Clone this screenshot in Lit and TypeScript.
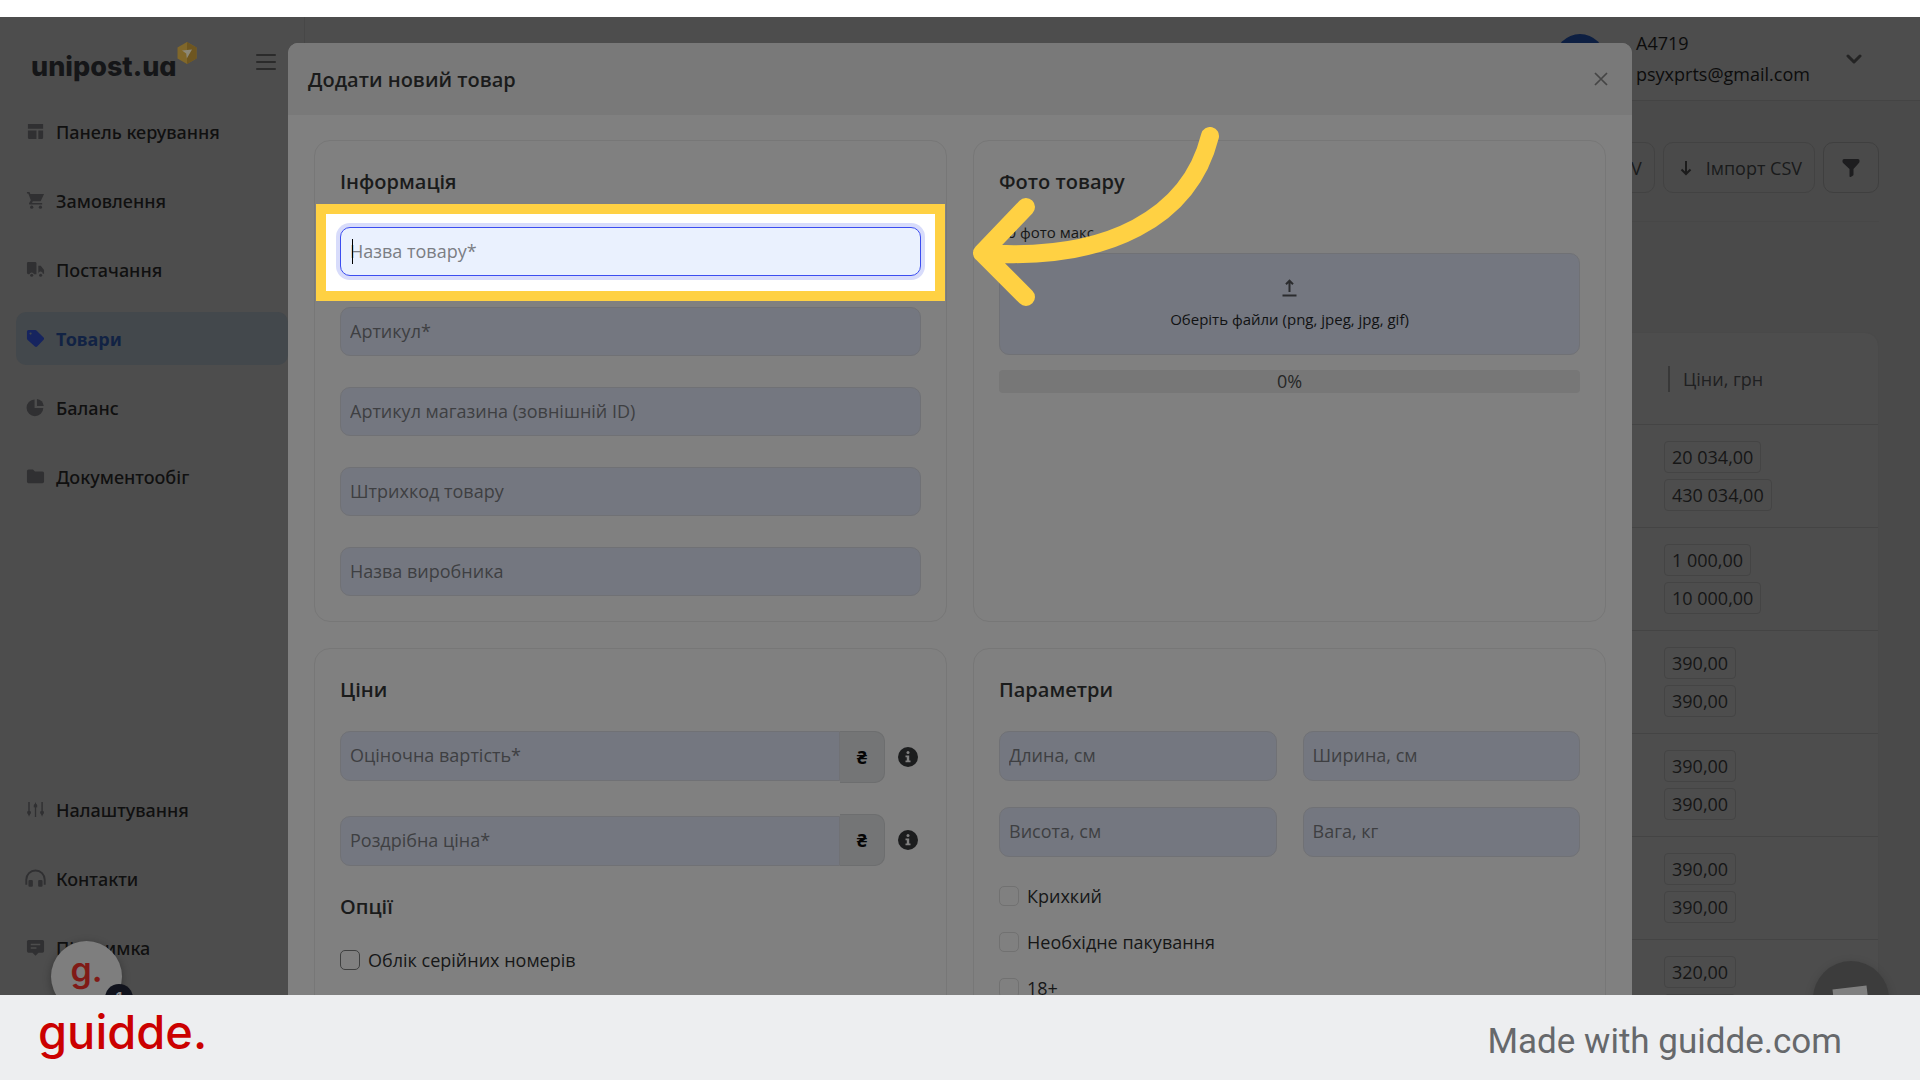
import { LitElement, html, css, svg, nothing } from "lit";
import { customElement, property } from "lit/decorators.js";
import { classMap } from "lit/directives/class-map.js";

const icons: Record<string, unknown> = {
  dashboard: svg`<path d="M2 2h16v5H2zM2 9h9v9H3.500a1.500 1.500 0 0 1-1.500-1.500zM13 9h5v7.500a1.500 1.500 0 0 1-1.500 1.500H13z"/>`,
  cart: svg`<path d="M1 1h2.600l1 2.200H19l-3.600 7.600H7.200l-.9 1.700H17v1.800H4.200a1 1 0 0 1-.8-1.600l1.700-2.900L2.400 2.700H1z"/><circle cx="6" cy="17" r="1.700"/><circle cx="15.200" cy="17" r="1.700"/>`,
  truck: svg`<path d="M1 3.500A1.500 1.500 0 0 1 2.500 2h7A1.500 1.500 0 0 1 11 3.500V15H8.400a2.500 2.500 0 0 0-4.800 0H2.500A1.500 1.500 0 0 1 1 13.500zM13 6h2.500L19 10.500v4h-1.300a2.400 2.400 0 0 0-4.700-.6z"/><circle cx="6" cy="16" r="1.600"/><circle cx="15.400" cy="16" r="1.600"/>`,
  tag: svg`<path d="M1 2.600A1.600 1.600 0 0 1 2.600 1h7.200c.5 0 .9.200 1.200.5l7.500 7.500c.7.700.7 1.600 0 2.300l-6.800 7.200c-.6.700-1.600.7-2.300 0L1.500 11.200a1.600 1.600 0 0 1-.5-1.200z"/><circle class="hole" cx="4.800" cy="4.800" r="1.200"/>`,
  pie: svg`<path d="M9 1.500v9h9.200A8.800 8.800 0 1 1 9 1.500z"/><path d="M11.500 1a8 8 0 0 1 7.200 7.500h-7.200z"/>`,
  folder: svg`<path d="M1 4.200A1.700 1.700 0 0 1 2.700 2.500h4.600L9.500 4.700h7.800A1.700 1.700 0 0 1 19 6.400v8.900a1.700 1.700 0 0 1-1.700 1.700H2.700A1.700 1.700 0 0 1 1 15.300z"/>`,
  sliders: svg`<path d="M2.400 2h1.500v10h1.300l-2 5.500-2-5.500h1.200zM9.300 7.500H8l2-5.500 2 5.500h-1.300V18H9.300zM16.200 2h1.500v10h1.200l-2 5.500-2-5.500h1.300z"/><circle cx="3.200" cy="13.500" r="1.900"/><circle cx="10" cy="6" r="1.900"/><circle cx="16.900" cy="13.500" r="1.900"/>`,
  headphones: svg`<path class="line" d="M.3 16.500v-5.300a9.700 9.700 0 0 1 19.400 0v5.300"/><rect x="2.600" y="11.500" width="4.600" height="7.200" rx="1.200"/><rect x="12.800" y="11.500" width="4.600" height="7.200" rx="1.200"/>`,
  message: svg`<path fill-rule="evenodd" d="M2.700 2h14.600A1.700 1.700 0 0 1 19 3.700v10.100a1.700 1.700 0 0 1-1.700 1.700h-4.200L10 18.700l-3.100-3.200H2.700A1.700 1.700 0 0 1 1 13.800V3.700A1.700 1.700 0 0 1 2.700 2zM5 6v1.500h10V6zM5 9.800v1.500h6V9.800z"/>`,
};

interface NavItem {
  icon: string;
  label: string;
  active?: boolean;
}

const mainNav: NavItem[] = [
  { icon: "dashboard", label: "Панель керування" },
  { icon: "cart", label: "Замовлення" },
  { icon: "truck", label: "Постачання" },
  { icon: "tag", label: "Товари", active: true },
  { icon: "pie", label: "Баланс" },
  { icon: "folder", label: "Документообіг" },
];

const footNav: NavItem[] = [
  { icon: "sliders", label: "Налаштування" },
  { icon: "headphones", label: "Контакти" },
  { icon: "message", label: "Підтримка" },
];

const prices: string[][] = [
  ["20 034,00", "430 034,00"],
  ["1 000,00", "10 000,00"],
  ["390,00", "390,00"],
  ["390,00", "390,00"],
  ["390,00", "390,00"],
  ["320,00", "320,00"],
];

const base = css`
  :host,
  * {
    box-sizing: border-box;
  }
  button,
  input {
    font: inherit;
    color: inherit;
  }
  h1,
  h2,
  p {
    margin: 0;
  }
  svg {
    display: block;
  }
`;

@customElement("side-nav")
class SideNav extends LitElement {
  static styles = [
    base,
    css`
      :host {
        display: flex;
        flex-direction: column;
        background: #4d4d4d;
        border-right: 1px solid #474747;
        padding: 22px 16px 21px;
      }
      .top {
        display: flex;
        justify-content: space-between;
        align-items: flex-start;
        height: 66px;
        padding: 3px 12px 0 15px;
      }
      .logo {
        display: flex;
        align-items: flex-start;
        color: #151618;
        font: 800 27px/32px Inter, sans-serif;
        font-feature-settings: "cv11";
        text-decoration: none;
      }
      .word {
        padding-top: 9px;
      }
      .burger {
        border: 0;
        background: none;
        padding: 0;
        margin-top: 10px;
        height: 20px;
      }
      .list {
        display: flex;
        flex-direction: column;
        gap: 16px;
      }
      .foot {
        margin-top: auto;
      }
      .item {
        display: flex;
        align-items: center;
        gap: 11px;
        height: 53px;
        padding-left: 10px;
        border-radius: 10px;
        color: #101010;
        font-family: "Noto Sans", "Open Sans", sans-serif;
        font-weight: 500;
        text-decoration: none;
      }
      .item.active {
        background: #43484c;
        color: #122344;
        font-weight: 700;
      }
      .icon {
        width: 19px;
        height: 19px;
        fill: #303032;
        overflow: visible;
      }
      .active .icon {
        fill: #16245f;
      }
      .hole {
        fill: #43484c;
      }
      .line {
        fill: none;
        stroke: #303032;
        stroke-width: 2;
      }
    `,
  ];

  private item(n: NavItem) {
    return html`<a href="#" class=${classMap({ item: true, active: !!n.active })}>
      <svg class="icon" viewBox="0 0 20 20" aria-hidden="true">${icons[n.icon]}</svg>
      <span>${n.label}</span>
    </a>`;
  }

  render() {
    return html`
      <div class="top">
        <a class="logo" href="#">
          <span class="word">unipost.ua</span>
          <svg width="20" height="22" viewBox="0 0 20 22" aria-hidden="true">
            <path fill="#80672a" d="M10 0l9.500 5.500v11L10 22 .500 16.500v-11z" />
            <path fill="#6e5620" d="M10 0l9.500 5.500v11L10 22z" />
            <path fill="#8c8878" d="M15 7.500L5 8.600l4.200 2.800.6 5z" />
          </svg>
        </a>
        <button class="burger" aria-label="Меню">
          <svg width="20" height="20" viewBox="0 0 20 20" aria-hidden="true">
            <path fill="none" stroke="#2b2b2b" stroke-width="2" stroke-linecap="round" d="M1 3h18M1 10h18M1 17h18" />
          </svg>
        </button>
      </div>
      <nav class="list">${mainNav.map((n) => this.item(n))}</nav>
      <nav class="list foot">${footNav.map((n) => this.item(n))}</nav>
    `;
  }
}

@customElement("product-page")
class ProductPage extends LitElement {
  static styles = [
    base,
    css`
      :host {
        display: block;
        background: #4a4a4a;
      }
      .bar {
        display: flex;
        justify-content: flex-end;
        align-items: center;
        height: 84px;
        padding: 0 58px 0 0;
        background: #4d4d4d;
        border-bottom: 1px solid #444;
        color: #0c0c0c;
      }
      .avatar {
        width: 50px;
        height: 50px;
        border-radius: 50%;
        background: #0d1f42;
        margin-right: 31px;
      }
      .user {
        width: 210px;
        line-height: 31px;
      }
      .chevron {
        border: 0;
        background: none;
        padding: 0;
        height: 16px;
      }
      .content {
        padding: 41px 41px 0 41px;
      }
      .tools {
        display: flex;
        justify-content: flex-end;
        gap: 8px;
        padding-bottom: 28px;
        border-bottom: 1px solid #474747;
        color: #191a1b;
      }
      .tool {
        display: flex;
        align-items: center;
        gap: 14px;
        height: 51px;
        padding: 0 12px 0 16px;
        border: 1px solid #424242;
        border-radius: 10px;
        background: none;
      }
      .tool.square {
        padding: 0 18px;
        border-color: #3f3f3f;
      }
      .table {
        width: 100%;
        margin-top: 110px;
        border-collapse: separate;
        border-spacing: 0;
        background: #4d4d4d;
        border: 1px solid #494949;
        border-radius: 14px;
        color: #161616;
      }
      th {
        height: 92px;
        padding: 0;
        text-align: left;
        font-weight: 400;
        border-bottom: 1px solid #444;
        color: #1f2021;
      }
      td {
        padding: 16px 0;
        border-bottom: 1px solid #444;
      }
      .price {
        width: 214px;
      }
      .head {
        display: block;
        margin-left: 4px;
        padding-left: 13px;
        border-left: 2px solid #383838;
        line-height: 26px;
      }
      .stack {
        display: flex;
        flex-direction: column;
        align-items: flex-start;
        gap: 6px;
      }
      .badge {
        height: 32px;
        padding: 0 7px;
        border: 1px solid #444;
        border-radius: 4px;
        line-height: 30px;
      }
    `,
  ];

  render() {
    return html`
      <header class="bar">
        <div class="avatar"></div>
        <div class="user">
          <div>A4719</div>
          <div>psyxprts@gmail.com</div>
        </div>
        <button class="chevron" aria-label="Профіль">
          <svg width="16" height="16" viewBox="0 0 16 16" aria-hidden="true">
            <path fill="none" stroke="#242424" stroke-width="3" stroke-linecap="round" stroke-linejoin="round" d="M2 5l6 6 6-6" />
          </svg>
        </button>
      </header>
      <div class="content">
        <div class="tools">
          <button class="tool">Експорт CSV</button>
          <button class="tool">
            <svg width="12" height="16" viewBox="0 0 12 16" aria-hidden="true">
              <path fill="none" stroke="#1c1c1c" stroke-width="2" d="M6 1v13M1.500 9.500L6 14l4.500-4.500" />
            </svg>
            <span>Імпорт CSV</span>
          </button>
          <button class="tool square" aria-label="Фільтр">
            <svg width="18" height="20" viewBox="0 0 18 20" aria-hidden="true">
              <path fill="#1d1d1f" d="M2 1h14a1.500 1.500 0 0 1 1.500 1.500v1c0 .6-.2 1-.6 1.400L11.500 11v5.500c0 .6-.3 1-.8 1.300l-2 1.100c-.6.300-1.200 0-1.200-.7V11L1.100 4.900A2 2 0 0 1 .500 3.500v-1A1.500 1.500 0 0 1 2 1z" />
            </svg>
          </button>
        </div>
        <table class="table">
          <thead>
            <tr>
              <th></th>
              <th class="price"><span class="head">Ціни, грн</span></th>
            </tr>
          </thead>
          <tbody>
            ${prices.map(
              (row) => html`<tr>
                <td></td>
                <td class="price">
                  <div class="stack">${row.map((p) => html`<span class="badge">${p}</span>`)}</div>
                </td>
              </tr>`
            )}
          </tbody>
        </table>
      </div>
    `;
  }
}

@customElement("text-field")
class TextField extends LitElement {
  @property() label = "";
  @property({ type: Boolean }) currency = false;
  @property({ type: Boolean }) focused = false;
  @property({ type: Boolean }) low = false;

  static styles = [
    base,
    css`
      :host {
        display: block;
        position: relative;
      }
      .row {
        display: flex;
        align-items: flex-start;
      }
      .row.low {
        align-items: flex-end;
      }
      .input {
        flex: 1;
        min-width: 0;
        width: 100%;
        height: var(--field-height, 49px);
        padding: 0 9px 2px;
        border: 1px solid #707175;
        border-radius: 10px;
        background: #747780;
        outline: none;
      }
      .input::placeholder {
        color: #3e3f42;
        opacity: 1;
      }
      .currency .input {
        border-radius: 10px 0 0 10px;
      }
      .addon {
        display: grid;
        place-items: center;
        width: 45px;
        height: 52px;
        border: 1px solid #6d6e6f;
        border-left: 0;
        border-radius: 0 10px 10px 0;
        background: #747576;
        color: #050505;
        font-weight: 700;
      }
      .info {
        align-self: center;
        border: 0;
        background: none;
        padding: 0;
        margin: 0 3px 0 13px;
        height: 20px;
      }
      .focused .input {
        position: relative;
        z-index: 2;
        border-color: #3c4df0;
        background: #eaf1fe;
        box-shadow: 0 0 0 4px #d8dcfb;
      }
      .focused .input::placeholder {
        color: #7b7e84;
      }
      .spot {
        position: absolute;
        inset: -23px -24px -25px;
        z-index: 1;
        border: 10px solid #ffd143;
        background: #fff;
      }
      .caret {
        position: absolute;
        z-index: 3;
        left: 12px;
        top: 12px;
        width: 1px;
        height: 25px;
        background: #000;
      }
      .arrow {
        position: absolute;
        z-index: 3;
        left: calc(100% + 51px);
        top: -100px;
      }
    `,
  ];

  render() {
    return html`
      ${this.focused
        ? html`<div class="spot"></div>
            <div class="caret"></div>
            <svg class="arrow" width="248" height="180" viewBox="972 127 248 180" aria-hidden="true">
              <path
                fill="none"
                stroke="#ffd143"
                stroke-width="18"
                stroke-linecap="round"
                stroke-linejoin="round"
                d="M1210 136C1190 216 1110 262 982 253M1026 207L982 253L1026 297"
              />
            </svg>`
        : nothing}
      <div class=${classMap({ row: true, currency: this.currency, focused: this.focused, low: this.low })}>
        <input class="input" type="text" placeholder=${this.label} aria-label=${this.label} />
        ${this.currency
          ? html`<span class="addon">₴</span>
              <button class="info" aria-label="Довідка">
                <svg width="20" height="20" viewBox="0 0 20 20" aria-hidden="true">
                  <circle cx="10" cy="10" r="10" fill="#1c1d1e" />
                  <circle cx="10" cy="5.500" r="1.500" fill="#808080" />
                  <path fill="#808080" d="M7.500 8.500h3.700v5h1.300v1.800h-5v-1.800h1.300v-3.200H7.500z" />
                </svg>
              </button>`
          : nothing}
      </div>
    `;
  }
}

@customElement("product-dialog")
class ProductDialog extends LitElement {
  static styles = [
    base,
    css`
      :host {
        display: block;
        background: #808080;
        border-radius: 10px 10px 0 0;
      }
      .head {
        display: flex;
        justify-content: space-between;
        align-items: center;
        height: 72px;
        padding: 0 24px 0 20px;
        border-radius: 10px 10px 0 0;
        background: #797979;
      }
      .title {
        padding-top: 1px;
        font-size: 20px;
        font-weight: 600;
        line-height: 30px;
        color: #1a1b1b;
      }
      .close {
        border: 0;
        background: none;
        padding: 0;
        height: 14px;
      }
      .grid {
        display: grid;
        grid-template-columns: 1fr 1fr;
        gap: 26px;
        padding: 25px 26px 26px;
      }
      .card {
        padding: 25px;
        border: 1px solid #777;
        border-radius: 16px;
        color: #161717;
      }
      .card .title {
        margin-bottom: 26px;
      }
      .card .title.wide {
        margin-bottom: 30px;
      }
      .fields {
        display: grid;
        gap: 31px;
      }
      .tall {
        --field-height: 50px;
      }
      .pairs {
        display: grid;
        grid-template-columns: 1fr 1fr;
        gap: 26px;
        margin-bottom: 26px;
        --field-height: 50px;
      }
      .card .title.low-title {
        margin: 25px 0;
      }
      .hint {
        margin: -7px 0 9px;
        font-size: 15px;
        line-height: 24px;
      }
      .drop {
        display: flex;
        flex-direction: column;
        align-items: center;
        justify-content: center;
        gap: 10px;
        width: 100%;
        height: 102px;
        padding: 1px 0 0;
        border: 1px solid #707175;
        border-radius: 10px;
        background: #747780;
        color: #111213;
        font-size: 15px;
        line-height: 24px;
      }
      .progress {
        margin-top: 15px;
        height: 23px;
        border-radius: 4px;
        background: #777;
        text-align: center;
        line-height: 23px;
        color: #262727;
      }
      .checks {
        display: grid;
        gap: 20px;
      }
      .check {
        display: flex;
        align-items: center;
        gap: 8px;
        height: 26px;
      }
      .box {
        appearance: none;
        width: 20px;
        height: 20px;
        margin: 0;
        border: 1px solid #717171;
        border-radius: 5px;
      }
      .box.strong {
        border-color: #3f4040;
      }
    `,
  ];

  private check(label: string, strong = false) {
    return html`<label class="check">
      <input type="checkbox" class=${classMap({ box: true, strong })} />
      <span>${label}</span>
    </label>`;
  }

  render() {
    return html`
      <header class="head">
        <h1 class="title">Додати новий товар</h1>
        <button class="close" aria-label="Закрити">
          <svg width="14" height="14" viewBox="0 0 14 14" aria-hidden="true">
            <path fill="none" stroke="#454545" stroke-width="1.700" d="M1 1l12 12M13 1L1 13" />
          </svg>
        </button>
      </header>
      <div class="grid">
        <section class="card">
          <h2 class="title wide">Інформація</h2>
          <div class="fields">
            <text-field label="Назва товару*" focused></text-field>
            <text-field label="Артикул*"></text-field>
            <text-field label="Артикул магазина (зовнішній ID)"></text-field>
            <text-field label="Штрихкод товару"></text-field>
            <text-field label="Назва виробника"></text-field>
          </div>
        </section>
        <section class="card">
          <h2 class="title wide">Фото товару</h2>
          <p class="hint">10 фото макс</p>
          <button class="drop">
            <svg width="15" height="18" viewBox="0 0 15 18" aria-hidden="true">
              <path fill="none" stroke="#2b2c2e" stroke-width="2" d="M7.500 13V2M4 5.200L7.500 1.700 11 5.200M.500 16.500h14" />
            </svg>
            <span>Оберіть файли (png, jpeg, jpg, gif)</span>
          </button>
          <div class="progress" role="progressbar" aria-valuenow="0" aria-label="Завантаження">0%</div>
        </section>
        <section class="card">
          <h2 class="title">Ціни</h2>
          <div class="fields tall">
            <text-field label="Оціночна вартість*" currency></text-field>
            <text-field label="Роздрібна ціна*" currency low></text-field>
          </div>
          <h2 class="title low-title">Опції</h2>
          <div class="checks">${this.check("Облік серійних номерів", true)}</div>
        </section>
        <section class="card">
          <h2 class="title">Параметри</h2>
          <div class="pairs">
            <text-field label="Длина, см"></text-field>
            <text-field label="Ширина, см"></text-field>
            <text-field label="Висота, см"></text-field>
            <text-field label="Вага, кг"></text-field>
          </div>
          <div class="checks">
            ${this.check("Крихкий")} ${this.check("Необхідне пакування")} ${this.check("18+")}
          </div>
        </section>
      </div>
    `;
  }
}

@customElement("app-root")
class AppRoot extends LitElement {
  static styles = [
    base,
    css`
      :host {
        display: flex;
        flex-direction: column;
        height: 100vh;
        padding-top: 17px;
        background: #fff;
        font: 400 18px/26px "Open Sans", "Noto Sans", sans-serif;
      }
      .screen {
        position: relative;
        flex: 1;
        min-height: 0;
        overflow: hidden;
        display: grid;
        grid-template-columns: 305px 1fr;
        grid-template-rows: 100%;
      }
      .dialog {
        position: absolute;
        top: 26px;
        left: 15%;
        right: 15%;
      }
      .widget {
        position: absolute;
        left: 51px;
        bottom: -17px;
        width: 71px;
        height: 71px;
        border-radius: 50%;
        background: #7e7e7e;
        box-shadow: 0 2px 8px rgba(0, 0, 0, 0.3);
        color: #801a16;
        text-align: center;
        font: 600 34px/58px Inter, sans-serif;
      }
      .count {
        position: absolute;
        left: 54px;
        top: 43px;
        width: 28px;
        height: 28px;
        border-radius: 50%;
        background: #11131d;
        color: #8a8a8a;
        font: 700 15px/28px Inter, sans-serif;
      }
      .chat {
        position: absolute;
        right: 31px;
        bottom: -42px;
        width: 76px;
        height: 76px;
        padding: 0;
        border: 0;
        border-radius: 50%;
        background: #3c3c3c;
        box-shadow: 0 2px 10px rgba(0, 0, 0, 0.15);
      }
      .footer {
        display: flex;
        justify-content: space-between;
        align-items: center;
        height: 85px;
        padding: 0 78px 0 38px;
        background: #edeef0;
        color: #66686b;
        font: 400 35px/48px Roboto, sans-serif;
      }
      .brand {
        color: #cb0000;
        font: 500 47px/56px Inter, sans-serif;
        padding-bottom: 11px;
      }
      .made {
        padding-top: 8px;
      }
    `,
  ];

  render() {
    return html`
      <div class="screen">
        <side-nav></side-nav>
        <product-page></product-page>
        <product-dialog class="dialog"></product-dialog>
        <div class="widget">g.<span class="count">1</span></div>
        <button class="chat" aria-label="Чат">
          <svg width="76" height="76" viewBox="0 0 76 76" aria-hidden="true">
            <path fill="#808080" d="M19.500 28.500L53.500 24.500 57 54 42 52 37 58 34 52 22 50z" />
          </svg>
        </button>
      </div>
      <footer class="footer">
        <span class="brand">guidde.</span>
        <span class="made">Made with guidde.com</span>
      </footer>
    `;
  }
}
